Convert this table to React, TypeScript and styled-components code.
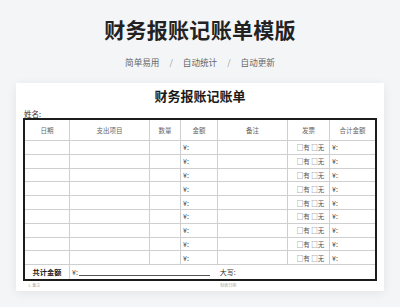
import React from "react";
import styled, { createGlobalStyle } from "styled-components";

const Global = createGlobalStyle`
  html, body { margin: 0; padding: 0; }
  body {
    background: #f4f5f7;
    font-family: "Noto Sans CJK SC", "Noto Sans", sans-serif;
    width: 400px;
    height: 307px;
    overflow: hidden;
  }
`;

const Page = styled.div`
  display: flex;
  flex-direction: column;
  align-items: center;
  padding-top: 16px;
`;

const Title = styled.h1`
  margin: 0;
  font-size: 21px;
  line-height: 26px;
  font-weight: 700;
  color: #222;
  letter-spacing: 0.3px;
`;

const Tags = styled.div`
  margin-top: 14px;
  display: flex;
  align-items: center;
  gap: 10px;
  font-size: 8.6px;
  line-height: 12px;
  color: #666;
`;

const Slash = styled.span`
  color: #999;
`;

const Card = styled.div`
  margin-top: 15px;
  width: 368px;
  box-sizing: border-box;
  background: #fff;
  box-shadow: 0 2px 10px rgba(0, 0, 0, 0.07);
  padding: 5px 7px 2px 7px;
  display: flex;
  flex-direction: column;
`;

const SheetTitle = styled.div`
  text-align: center;
  font-size: 13px;
  line-height: 16px;
  font-weight: 700;
  color: #1a1a1a;
`;

const NameRow = styled.div`
  height: 14px;
  display: flex;
  align-items: flex-end;
  padding-left: 1px;
  font-size: 7.5px;
  line-height: 8px;
  color: #333;
`;

const Sheet = styled.div`
  display: grid;
  grid-template-columns: 45px 80px 31px 37px 70px 42px 1fr;
  grid-template-rows: 21px repeat(9, 13.8px) 14px;
  border: 2px solid #1c1c1c;
  width: 354px;
  box-sizing: border-box;
`;

const Cell = styled.div<{ $align?: "left" | "center"; $last?: boolean; $bottom?: boolean; $head?: boolean; $span?: number }>`
  box-sizing: border-box;
  display: flex;
  align-items: center;
  justify-content: ${(p) => (p.$align === "left" ? "flex-start" : "center")};
  padding-left: ${(p) => (p.$align === "left" ? "2px" : "0")};
  border-right: ${(p) => (p.$last ? "none" : "1px solid #cfcfcf")};
  border-bottom: ${(p) => (p.$bottom ? "none" : "1px solid #cfcfcf")};
  font-size: ${(p) => (p.$head ? "6.5px" : "7px")};
  line-height: 8px;
  color: ${(p) => (p.$head ? "#666" : "#333")};
  white-space: nowrap;
  overflow: hidden;
  ${(p) => (p.$span ? `grid-column: span ${p.$span};` : "")}
`;

const Invoice = styled(Cell)`
  font-size: 6.5px;
  padding-left: 4px;
  color: #555;
`;

const TotalLabel = styled(Cell)`
  font-size: 7.2px;
  font-weight: 700;
  color: #222;
`;

const Underline = styled.span`
  display: inline-block;
  width: 131px;
  height: 6px;
  border-bottom: 1px solid #555;
  margin-left: 1px;
  margin-right: 10px;
`;

const Footer = styled.div`
  display: flex;
  gap: 180px;
  padding-left: 5px;
  height: 8px;
  align-items: center;
  font-size: 4px;
  line-height: 4px;
  color: #aaa;
`;

const headers = ["日期", "支出项目", "数量", "金额", "备注", "发票", "合计金额"];

export default function App() {
  const rows = Array.from({ length: 9 });
  return (
    <>
      <Global />
      <Page>
        <Title>财务报账记账单模版</Title>
        <Tags>
          <span>简单易用</span>
          <Slash>/</Slash>
          <span>自动统计</span>
          <Slash>/</Slash>
          <span>自动更新</span>
        </Tags>
        <Card>
          <SheetTitle>财务报账记账单</SheetTitle>
          <NameRow>姓名:</NameRow>
          <Sheet>
            {headers.map((h, i) => (
              <Cell key={h} $head $last={i === 6}>
                {h}
              </Cell>
            ))}
            {rows.map((_, r) => (
              <React.Fragment key={r}>
                <Cell />
                <Cell />
                <Cell />
                <Cell $align="left">¥:</Cell>
                <Cell />
                <Invoice>□有 □无</Invoice>
                <Cell $align="left" $last>¥:</Cell>
              </React.Fragment>
            ))}
            <TotalLabel $bottom>共计金额</TotalLabel>
            <Cell $align="left" $bottom $last $span={6}>
              ¥:<Underline />大写:
            </Cell>
          </Sheet>
          <Footer>
            <span>1. 备注</span>
            <span>制表日期</span>
          </Footer>
        </Card>
      </Page>
    </>
  );
}
